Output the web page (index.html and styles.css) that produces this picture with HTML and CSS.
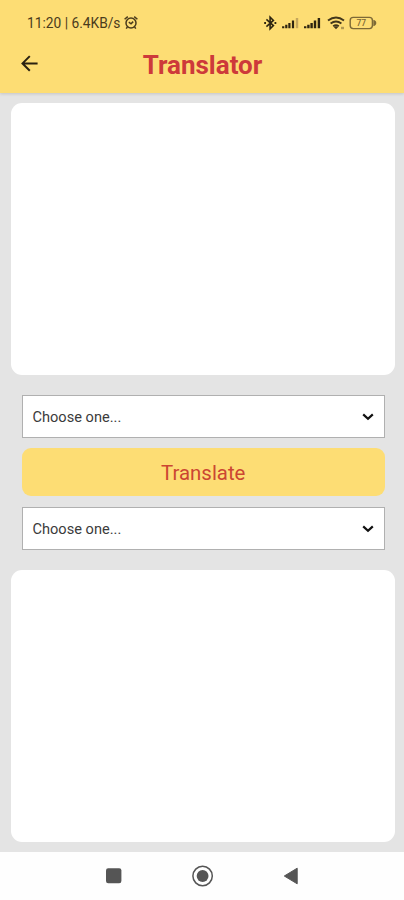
FILE: index.html
```html
<!DOCTYPE html>
<html lang="en">
<head>
<meta charset="utf-8">
<meta name="viewport" content="width=device-width, initial-scale=1">
<title>Translator</title>
<link rel="stylesheet" href="styles.css">
</head>
<body>
<header class="header">
  <div class="status">
    <span class="status-text">11:20 | 6.4KB/s</span>
    <svg class="alarm" width="14" height="14" viewBox="0 0 14 14" fill="none" stroke="#4a3b1c" stroke-width="1.5"><circle cx="7" cy="7" r="5"/><path d="M.6 3.3 3.8.6M13.4 3.3 10.2.6M4.8 6.2l2.2 1.6 2.2-2.2M3.4 11l-1.2 1.6M10.6 11l1.2 1.6"/></svg>
    <svg class="indicators" width="114" height="16" viewBox="0 0 114 16" fill="none">
      <path d="M3.4 4.4 10.4 10.6 7.1 13.8V2.2L10.4 5.4 3.4 11.6" stroke="#2d2410" stroke-width="1.6"/>
      <path d="M1.2 8h1.8M11.5 8h1.8" stroke="#2d2410" stroke-width="1.8"/>
      <path d="M20.2 11.3v1.9M23.3 9.8v3.4M26.4 8v5.2M30 5.4v7.8" stroke="#2d2410" stroke-width="2.2"/>
      <path d="M34 3v10.2" stroke="#c5a75c" stroke-width="2.4"/>
      <path d="M42.2 11.3v1.9M45.4 9.8v3.4M48.6 8v5.2M52 5.4v7.8M55.9 3v10.2" stroke="#2d2410" stroke-width="2.4"/>
      <path d="M65 5.6q8-6.4 16 0M67.6 8.6q5.4-4.2 10.8 0M70.2 11.3q2.8-2.1 5.6 0" stroke="#42371c" stroke-width="1.9"/>
      <path d="m70.8 12 2.2 2.2 2.2-2.2q-2.2-1.5-4.4 0Z" fill="#42371c"/>
      <path d="M78 13h3" stroke="#b39a53" stroke-width="2.4"/>
      <rect x="87.2" y="2.4" width="22.2" height="11.2" rx="3" stroke="#7d6936" stroke-width="1.4"/>
      <path d="M110.3 4.8q3 .8 3 3.2t-3 3.2Z" fill="#7d6936"/>
      <text class="charge" x="98.3" y="11" text-anchor="middle">77</text>
    </svg>
  </div>
  <div class="titlebar">
    <svg class="back" width="18" height="18" viewBox="0 0 18 18" fill="none" stroke="#2a2110" stroke-width="2"><path d="M16.6 9.4H1.8M8.8 2.1 1.5 9.4l7.3 7.3"/></svg>
    <h1 class="title">Translator</h1>
  </div>
</header>
<main class="main">
  <section class="panel"></section>
  <div class="controls">
    <div class="select"><span>Choose one...</span><svg class="chevron" width="12" height="8" viewBox="0 0 12 8" fill="none" stroke="#111" stroke-width="2.2"><path d="m1.2 1.4 4.8 4.4 4.8-4.4"/></svg></div>
    <button class="translate" type="button">Translate</button>
    <div class="select"><span>Choose one...</span><svg class="chevron" width="12" height="8" viewBox="0 0 12 8" fill="none" stroke="#111" stroke-width="2.2"><path d="m1.2 1.4 4.8 4.4 4.8-4.4"/></svg></div>
  </div>
  <section class="panel"></section>
</main>
<nav class="navbar">
  <svg width="22" height="22" viewBox="0 0 22 22"><rect x="3" y="3.3" width="15.4" height="15" rx="2.2" fill="#555"/></svg>
  <svg width="22" height="22" viewBox="0 0 22 22"><circle cx="10.6" cy="11" r="9.7" fill="none" stroke="#555" stroke-width="1.5"/><circle cx="10.6" cy="11" r="5.9" fill="#555"/></svg>
  <svg width="22" height="22" viewBox="0 0 22 22"><path d="M4.3 11 17.2 3.2v15.6Z" fill="#555" stroke="#555" stroke-width="1" stroke-linejoin="round"/></svg>
</nav>
</body>
</html>
```
FILE: styles.css
```css
* { box-sizing: border-box; }
body {
  margin: 0;
  width: 404px;
  height: 900px;
  display: flex;
  flex-direction: column;
  overflow: hidden;
  background: #fefefe;
  font-family: Roboto, "Liberation Sans", sans-serif;
}
svg { display: block; flex: none; }
.header {
  height: 92.5px;
  background: #fddd74;
  box-shadow: 0 1px 3px rgba(0, 0, 0, .14);
  position: relative;
}
.status {
  height: 31px;
  padding: 15px 27px 0;
  display: flex;
  align-items: center;
}
.status-text {
  width: 97px;
  font-size: 13.75px;
  line-height: 16px;
  white-space: nowrap;
  color: #4a3b1c;
}
.indicators { margin-left: auto; }
.charge { font-size: 8.5px; font-weight: 500; fill: #7d6936; }
.titlebar {
  height: 62px;
  padding: 2px 20px 0 21px;
  display: grid;
  grid-template-columns: 18px 1fr 18px;
  align-items: center;
}
.title {
  margin: 4px 0 0;
  text-align: center;
  font-size: 26px;
  line-height: 32px;
  font-weight: 700;
  color: #cd3a3a;
}
.main {
  height: 759px;
  padding: 10.5px 9.5px 11px 11px;
  background: #e4e4e4;
}
.panel {
  height: 271.5px;
  background: #fff;
  border-radius: 11px;
}
.controls {
  padding: 20px 9.5px 20px 10.5px;
  display: flex;
  flex-direction: column;
  gap: 10.5px;
}
.select {
  height: 43.3px;
  padding: 2px 10px 0;
  display: flex;
  align-items: center;
  justify-content: space-between;
  background: #fff;
  border: 1px solid #b0b0b0;
  font-size: 14.6px;
  color: #3b3b3b;
}
.translate {
  height: 48px;
  padding: 2px 0 0;
  border: 0;
  border-radius: 9px;
  background: #fddd74;
  color: #cb4632;
  font-family: inherit;
  font-size: 20.4px;
}
.navbar {
  height: 48px;
  padding: 0 102px 0 103px;
  display: flex;
  align-items: center;
  justify-content: space-between;
}
```
